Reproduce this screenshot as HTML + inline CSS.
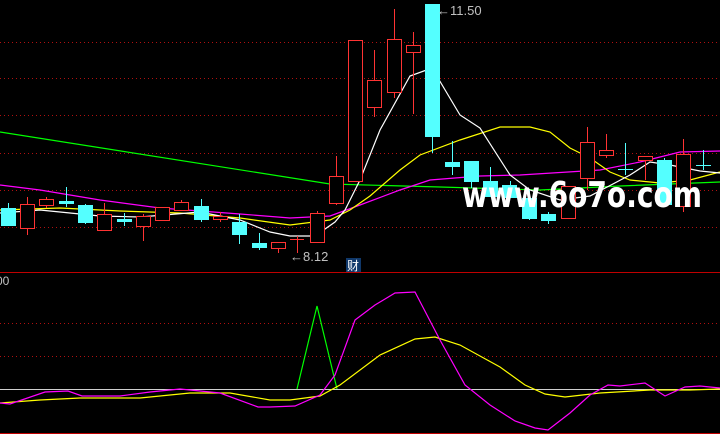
<!DOCTYPE html>
<html><head><meta charset="utf-8"><style>
html,body{margin:0;padding:0;background:#000;width:720px;height:434px;overflow:hidden}
svg{display:block}
</style></head><body>
<svg width="720" height="434" xmlns="http://www.w3.org/2000/svg" shape-rendering="crispEdges">
<rect width="720" height="434" fill="#000"/>
<g stroke="#b01010" stroke-width="1" stroke-dasharray="1,3">
<line x1="0" y1="42.5" x2="720" y2="42.5"/><line x1="0" y1="78.5" x2="720" y2="78.5"/>
<line x1="0" y1="115.5" x2="720" y2="115.5"/><line x1="0" y1="153.5" x2="720" y2="153.5"/>
<line x1="0" y1="190.5" x2="720" y2="190.5"/><line x1="0" y1="227.5" x2="720" y2="227.5"/>
<line x1="0" y1="323.5" x2="720" y2="323.5"/><line x1="0" y1="356.5" x2="720" y2="356.5"/>
</g>
<line x1="0" y1="272.5" x2="720" y2="272.5" stroke="#c00000"/>
<line x1="0" y1="433.5" x2="720" y2="433.5" stroke="#c00000"/>
<g shape-rendering="auto" fill="none" stroke-width="1.2">
<polyline stroke="#00ff00" points="0,132 330,184 440,187 540,190 620,186 720,182"/>
<polyline stroke="#ff00ff" points="0,185 40,190 100,200 160,208 240,214 290,218 330,216 360,205 400,190 430,180 480,176 520,175 600,170 640,162 680,152 720,151"/>
<polyline stroke="#ffff00" points="0,210 60,208 120,211 180,213 240,218 290,225 330,220 350,210 370,196 400,170 420,155 460,140 500,127 530,127 550,132 570,148 590,158 610,172 630,180 660,183 690,180 720,172"/>
<polyline stroke="#ffffff" points="0,213 40,210 100,216 140,217 200,212 240,220 270,232 290,236 315,236 335,222 345,210 360,180 380,130 410,76 432,68 460,115 480,128 510,175 530,190 560,200 590,196 630,175 650,162 670,165 700,171 720,173"/>
</g>
<g stroke="#ff3333" fill="#000">
<line x1="27.5" y1="197" x2="27.5" y2="235"/><rect x="20.5" y="204.5" width="14" height="24"/>
<line x1="46.5" y1="197" x2="46.5" y2="208"/><rect x="39.5" y="199.5" width="14" height="6"/>
<line x1="104.5" y1="203" x2="104.5" y2="231"/><rect x="97.5" y="214.5" width="14" height="16"/>
<line x1="143.5" y1="214" x2="143.5" y2="241"/><rect x="136.5" y="216.5" width="14" height="10"/>
<rect x="155.5" y="207.5" width="14" height="13"/>
<line x1="181.5" y1="200" x2="181.5" y2="210"/><rect x="174.5" y="202.5" width="14" height="8"/>
<line x1="220.5" y1="212" x2="220.5" y2="222"/><rect x="213.5" y="216.5" width="14" height="3"/>
<line x1="278.5" y1="242" x2="278.5" y2="253"/><rect x="271.5" y="242.5" width="14" height="6"/>
<line x1="297.5" y1="236" x2="297.5" y2="253"/><line x1="290" y1="239.5" x2="304" y2="239.5"/>
<line x1="317.5" y1="211" x2="317.5" y2="242"/><rect x="310.5" y="213.5" width="14" height="29"/>
<line x1="336.5" y1="156" x2="336.5" y2="205"/><rect x="329.5" y="176.5" width="14" height="27"/>
<rect x="348.5" y="40.5" width="14" height="141"/>
<line x1="374.5" y1="50" x2="374.5" y2="117"/><rect x="367.5" y="80.5" width="14" height="27"/>
<line x1="394.5" y1="9" x2="394.5" y2="98"/><rect x="387.5" y="39.5" width="14" height="53"/>
<line x1="413.5" y1="32" x2="413.5" y2="114"/><rect x="406.5" y="45.5" width="14" height="7"/>
<rect x="561.5" y="186.5" width="14" height="32"/>
<line x1="587.5" y1="127" x2="587.5" y2="190"/><rect x="580.5" y="142.5" width="14" height="36"/>
<line x1="606.5" y1="134" x2="606.5" y2="158"/><rect x="599.5" y="150.5" width="14" height="5"/>
<line x1="645.5" y1="156" x2="645.5" y2="180"/><rect x="638.5" y="156.5" width="14" height="4"/>
<line x1="683.5" y1="139" x2="683.5" y2="212"/><rect x="676.5" y="154.5" width="14" height="52"/>
</g>
<g stroke="#54ffff" fill="#54ffff">
<line x1="8.5" y1="203" x2="8.5" y2="226"/><rect x="1.5" y="208.5" width="14" height="17"/>
<line x1="66.5" y1="187" x2="66.5" y2="207"/><rect x="59.5" y="201.5" width="14" height="2"/>
<line x1="85.5" y1="204" x2="85.5" y2="224"/><rect x="78.5" y="205.5" width="14" height="17"/>
<line x1="124.5" y1="213" x2="124.5" y2="226"/><rect x="117.5" y="219.5" width="14" height="2"/>
<line x1="201.5" y1="199" x2="201.5" y2="222"/><rect x="194.5" y="206.5" width="14" height="13"/>
<line x1="239.5" y1="214" x2="239.5" y2="244"/><rect x="232.5" y="222.5" width="14" height="12"/>
<line x1="259.5" y1="233" x2="259.5" y2="250"/><rect x="252.5" y="243.5" width="14" height="4"/>
<line x1="432.5" y1="4" x2="432.5" y2="153"/><rect x="425.5" y="4.5" width="14" height="132"/>
<line x1="452.5" y1="141" x2="452.5" y2="175"/><rect x="445.5" y="162.5" width="14" height="4"/>
<line x1="471.5" y1="161" x2="471.5" y2="188"/><rect x="464.5" y="161.5" width="14" height="20"/>
<line x1="490.5" y1="167" x2="490.5" y2="197"/><rect x="483.5" y="181.5" width="14" height="15"/>
<line x1="510.5" y1="181" x2="510.5" y2="198"/><rect x="502.5" y="185.5" width="14" height="12"/>
<line x1="529.5" y1="190" x2="529.5" y2="220"/><rect x="522.5" y="198.5" width="14" height="20"/>
<line x1="548.5" y1="212" x2="548.5" y2="224"/><rect x="541.5" y="214.5" width="14" height="6"/>
<line x1="625.5" y1="143" x2="625.5" y2="175"/><line x1="618" y1="169.5" x2="633" y2="169.5"/>
<line x1="664.5" y1="158" x2="664.5" y2="205"/><rect x="657.5" y="160.5" width="14" height="44"/>
<line x1="703.5" y1="150" x2="703.5" y2="170"/><line x1="696" y1="165.5" x2="711" y2="165.5"/>
</g>
<text x="462" y="207" fill="#fff" font-family="DejaVu Sans, sans-serif" font-weight="bold" font-size="36" textLength="240" lengthAdjust="spacingAndGlyphs">www.6o7o.com</text>
<text x="290" y="261" fill="#c0c0c0" font-family="Liberation Sans, sans-serif" font-size="13">←8.12</text>
<text x="437" y="15" fill="#c0c0c0" font-family="Liberation Sans, sans-serif" font-size="13">←11.50</text>
<rect x="346" y="258" width="15" height="14" fill="#10386a"/>
<text x="347" y="270" fill="#fff" font-family="Noto Sans CJK SC, sans-serif" font-size="12">财</text>
<text x="-4" y="285" fill="#c0c0c0" font-family="Liberation Sans, sans-serif" font-size="12">00</text>
<line x1="0" y1="389.5" x2="720" y2="389.5" stroke="#d0d0d0"/>
<g shape-rendering="auto" fill="none" stroke-width="1.2">
<polyline stroke="#00ff00" points="297,389 317,306 337,389"/>
<polyline stroke="#ffff00" points="0,403 40,400 80,398 140,398 190,393 230,393 270,400 290,400 320,396 340,385 380,355 415,339 435,337 460,345 500,367 525,385 545,394 565,397 600,393 650,390 690,390 720,389"/>
<polyline stroke="#ff00ff" points="0,403 10,404 45,392 68,391 82,396 120,396 150,392 180,389 220,393 258,407 270,407 295,406 320,395 335,375 355,320 375,305 395,293 415,292 440,340 465,385 490,405 515,421 535,428 548,430 570,413 590,395 608,385 620,386 645,383 665,396 685,387 700,386 720,388"/>
</g>
</svg>
</body></html>
